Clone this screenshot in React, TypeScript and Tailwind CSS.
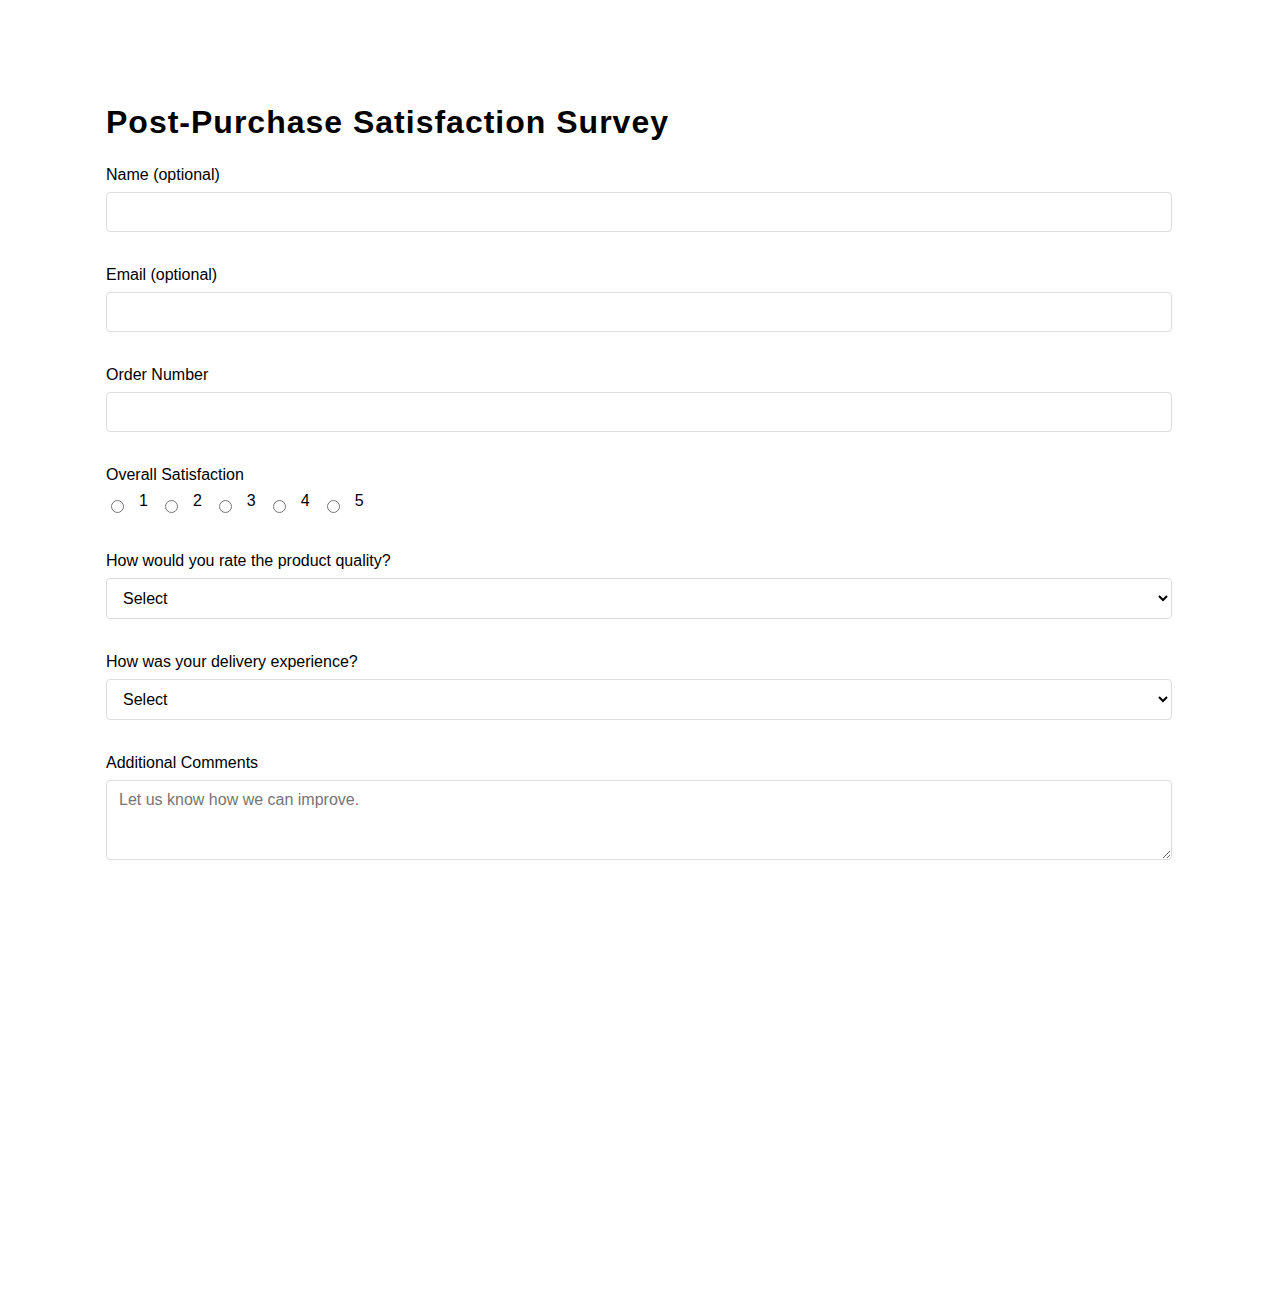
import { useState } from "react";

const fieldClass =
  "block w-full rounded-[4px] border border-[#dddddd] bg-white px-3 py-[10px] text-[16px] leading-[normal] text-black outline-none";

function TextField({ label, id }: { label: string; id: string }) {
  return (
    <div className="mb-[34px]">
      <label htmlFor={id} className="mb-2 block">
        {label}
      </label>
      <input id={id} type="text" className={fieldClass} />
    </div>
  );
}

function SelectField({ label, id, options }: { label: string; id: string; options: string[] }) {
  return (
    <div className="mb-[34px]">
      <label htmlFor={id} className="mb-2 block">
        {label}
      </label>
      <select id={id} defaultValue="" className={fieldClass}>
        <option value="">Select</option>
        {options.map((o) => (
          <option key={o} value={o}>
            {o}
          </option>
        ))}
      </select>
    </div>
  );
}

export default function App() {
  const [rating, setRating] = useState<number | null>(null);

  return (
    <div className="min-h-[1300px] bg-white font-['Liberation_Sans',Arial,sans-serif] text-[16px] leading-[normal] text-black">
      <div className="mx-auto w-[1066px] pt-[104px]">
        <h1 className="mb-[25px] text-[32px] font-bold leading-[normal] tracking-[1px]">
          Post-Purchase Satisfaction Survey
        </h1>

        <TextField label="Name (optional)" id="name" />
        <TextField label="Email (optional)" id="email" />
        <TextField label="Order Number" id="order" />

        {/* Overall satisfaction */}
        <div className="mb-[39px]">
          <div className="mb-2">Overall Satisfaction</div>
          <div className="flex">
            {[1, 2, 3, 4, 5].map((n) => (
              <label key={n} className="mr-[12px] flex items-start">
                <input
                  type="radio"
                  name="satisfaction"
                  checked={rating === n}
                  onChange={() => setRating(n)}
                  className="mt-[8px] mr-[15px] ml-[5px] h-[13px] w-[13px]"
                />
                <span>{n}</span>
              </label>
            ))}
          </div>
        </div>

        <SelectField
          label="How would you rate the product quality?"
          id="quality"
          options={["Excellent", "Good", "Average", "Poor"]}
        />
        <SelectField
          label="How was your delivery experience?"
          id="delivery"
          options={["Excellent", "Good", "Average", "Poor"]}
        />

        <div>
          <label htmlFor="comments" className="mb-2 block">
            Additional Comments
          </label>
          <textarea
            id="comments"
            placeholder="Let us know how we can improve."
            className="block h-20 w-full rounded-[4px] border border-[#dddddd] px-3 py-[10px] text-[16px] leading-[normal] text-black outline-none placeholder:text-[#757575]"
          />
        </div>
      </div>
    </div>
  );
}
